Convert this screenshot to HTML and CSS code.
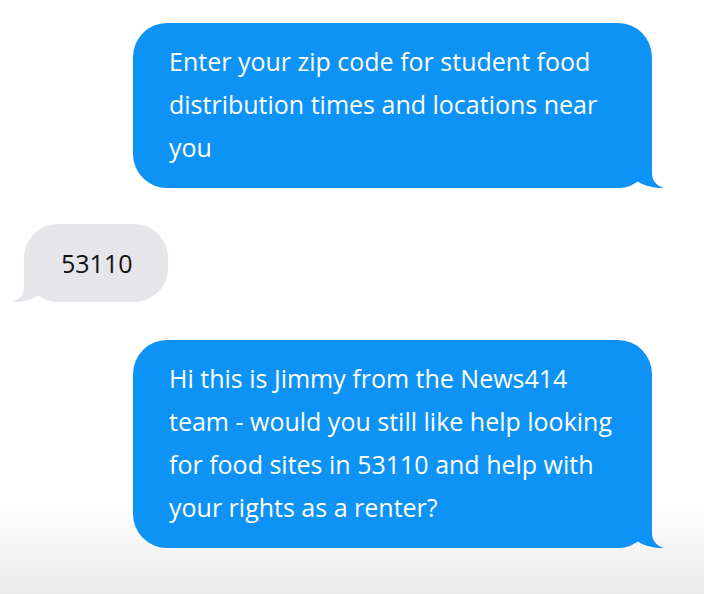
FILE: index.html
```html
<!DOCTYPE html>
<html>
<head>
<meta charset="utf-8">
<title>Messages</title>
<link rel="stylesheet" href="styles.css">
</head>
<body>

<div class="thread">

  <div class="msg sent">
    <p class="bubble">Enter your zip code for student food distribution times and locations near you</p>
    <svg class="tail" width="54" height="32" viewBox="0 0 54 32"><path d="M0,0 H40 V17 C40,25 45,30 52,32 C44,32.5 30,30 24,24 C19,29 10,32 0,32 Z"/></svg>
  </div>

  <div class="msg received">
    <p class="bubble">53110</p>
    <svg class="tail" width="54" height="32" viewBox="0 0 54 32"><path d="M0,0 H40 V17 C40,25 45,30 52,32 C44,32.5 30,30 24,24 C19,29 10,32 0,32 Z"/></svg>
  </div>

  <div class="msg sent">
    <p class="bubble">Hi this is Jimmy from the News414 team - would you still like help looking for food sites in 53110 and help with your rights as a renter?</p>
    <svg class="tail" width="54" height="32" viewBox="0 0 54 32"><path d="M0,0 H40 V17 C40,25 45,30 52,32 C44,32.5 30,30 24,24 C19,29 10,32 0,32 Z"/></svg>
  </div>

</div>

</body>
</html>
```

FILE: styles.css
```css
html { height: 100%; background: linear-gradient(#fff 0, #fff 85%, #ebebeb 100%); }

body { margin: 0; font: 25px/43px "Open Sans", "Noto Sans", sans-serif; }

.thread { display: flex; flex-direction: column; padding: 23px 52px 0 24px; }

.msg { position: relative; }
.msg.sent { align-self: flex-end; width: 519px; }
.msg.received { align-self: flex-start; margin: 36px 0 38px; }

.bubble { margin: 0; border-radius: 34px; }

.sent .bubble { background: #0d93f6; color: #fff; padding: 17px 28px 19px 36px; }
.received .bubble { background: #e5e5ea; color: #111; padding: 18px 36px 17px 37px; }

/* tail sits over the bottom corner of the bubble */
.tail { position: absolute; bottom: 0; }
.sent .tail { right: -14px; fill: #0d93f6; }
.received .tail { left: -14px; fill: #e5e5ea; transform: scaleX(-1); }
```
